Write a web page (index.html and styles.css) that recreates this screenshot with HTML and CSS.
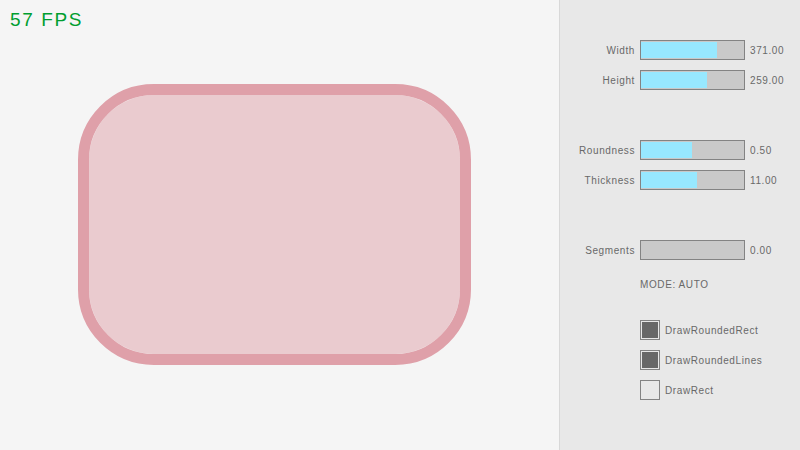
FILE: index.html
```html
<!DOCTYPE html>
<html>
<head>
<meta charset="utf-8">
<link rel="stylesheet" href="styles.css">
</head>
<body>
<div class="canvas">
  <div class="fps">57 FPS</div>
  <div class="rounded"></div>
</div>
<div class="panel">
  <div class="group">
    <div class="row"><span class="label">Width</span><div class="bar"><div class="fill" style="width:76px"></div></div><span class="value">371.00</span></div>
    <div class="row"><span class="label">Height</span><div class="bar"><div class="fill" style="width:66px"></div></div><span class="value">259.00</span></div>
  </div>
  <div class="group">
    <div class="row"><span class="label">Roundness</span><div class="bar"><div class="fill" style="width:51px"></div></div><span class="value">0.50</span></div>
    <div class="row"><span class="label">Thickness</span><div class="bar"><div class="fill" style="width:56px"></div></div><span class="value">11.00</span></div>
  </div>
  <div class="group">
    <div class="row"><span class="label">Segments</span><div class="bar"></div><span class="value">0.00</span></div>
  </div>
  <div class="mode">MODE: AUTO</div>
  <div class="checks">
    <div class="check"><div class="box checked"><div class="dot"></div></div><span>DrawRoundedRect</span></div>
    <div class="check"><div class="box checked"><div class="dot"></div></div><span>DrawRoundedLines</span></div>
    <div class="check"><div class="box"></div><span>DrawRect</span></div>
  </div>
</div>
</body>
</html>
```
FILE: styles.css
```css
html, body {
  margin: 0;
  padding: 0;
}
body {
  width: 800px;
  height: 450px;
  display: flex;
  overflow: hidden;
  font-family: "Liberation Sans", Arial, sans-serif;
}
.canvas {
  width: 560px;
  height: 450px;
  flex: none;
  background: #f5f5f5;
  border-right: 1px solid #d8d8d8;
  padding: 10px 0 0 10px;
  box-sizing: border-box;
}
.fps {
  color: #009e2f;
  font-size: 19px;
  line-height: 20px;
  letter-spacing: 1.6px;
  height: 20px;
}
.rounded {
  margin-top: 54px;
  margin-left: 68px;
  width: 393px;
  height: 281px;
  box-sizing: border-box;
  border: 11px solid #dfa0a9;
  border-radius: 75.75px;
  background: #eacbcf;
  background-clip: padding-box;
}
.panel {
  width: 240px;
  height: 450px;
  flex: none;
  background: #e8e8e8;
  padding-top: 40px;
  box-sizing: border-box;
  color: #686868;
  font-size: 10px;
  letter-spacing: 0.6px;
}
.group {
  display: flex;
  flex-direction: column;
  gap: 10px;
  margin-bottom: 50px;
}
.group:nth-child(3) {
  margin-bottom: 20px;
}
.row {
  display: flex;
  align-items: center;
  height: 20px;
}
.label {
  width: 75px;
  text-align: right;
  margin-right: 5px;
}
.bar {
  width: 105px;
  height: 20px;
  box-sizing: border-box;
  border: 1px solid #838383;
  background: #c9c9c9;
  padding: 1px 0;
  margin-right: 5px;
}
.fill {
  height: 16px;
  background: #97e8ff;
}
.mode {
  margin-left: 80px;
  line-height: 10px;
  height: 10px;
}
.checks {
  margin-top: 30px;
  margin-left: 80px;
  display: flex;
  flex-direction: column;
  gap: 10px;
}
.check {
  display: flex;
  align-items: center;
  height: 20px;
}
.box {
  width: 20px;
  height: 20px;
  box-sizing: border-box;
  border: 1px solid #838383;
  padding: 1px;
  margin-right: 5px;
}
.dot {
  width: 16px;
  height: 16px;
  background: #686868;
}
```
